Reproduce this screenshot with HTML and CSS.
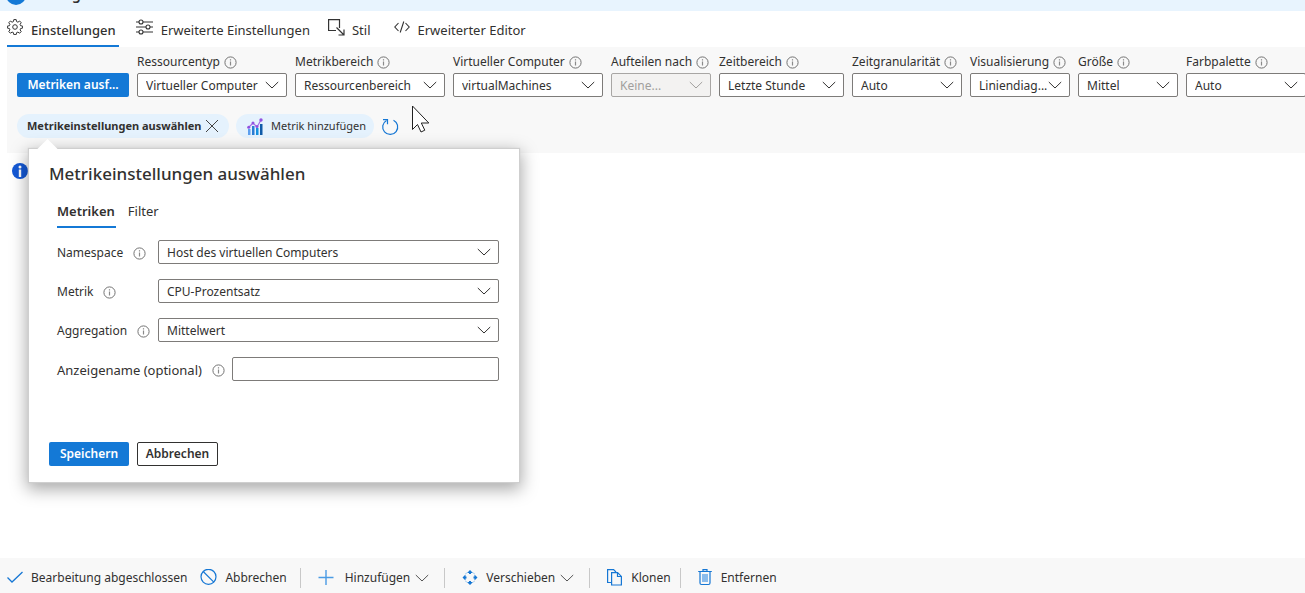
FILE: index.html
```
<!DOCTYPE html>
<html lang="de">
<head>
<meta charset="utf-8">
<title>Metriken</title>
<link rel="stylesheet" href="styles.css">
</head>
<body>
<svg class="sprite" aria-hidden="true">
  <symbol id="info" viewBox="0 0 13 13"><circle cx="6.5" cy="6.5" r="5.6" fill="none" stroke="#737373"/><path d="M6.5 5.5v4" stroke="#8a8a8a" stroke-width="1.2"/><path d="M6.5 3.2v1.3" stroke="#8a8a8a" stroke-width="1.2"/></symbol>
  <symbol id="chevron" viewBox="0 0 14 8"><path d="M.8 1L7 7l6.200-6" fill="none" stroke="currentColor"/></symbol>
</svg>
<div class="page">
  <header class="titlebar"><span class="title-dot"></span><span class="title-text">g</span></header>

  <nav class="tabs">
    <button class="tab tab-active"><svg width="16" height="16" viewBox="0 0 16 16" fill="none" stroke="#333"><circle cx="8" cy="8" r="2.3"/><path d="M6.8 .6h2.4l.4 2 1.3.6 1.7-1.2 1.6 1.7-1.1 1.7.5 1.3 2 .4v2l-2 .4-.5 1.4 1.1 1.7-1.6 1.6-1.7-1.1-1.3.5-.4 2H6.8l-.4-2-1.3-.5-1.7 1.1-1.6-1.6 1.1-1.7-.5-1.4-2-.4v-2l2-.4.5-1.3-1.1-1.7L3.400 2l1.700 1.200 1.300-.6z"/></svg>Einstellungen</button>
    <button class="tab tab-near"><svg width="17" height="16" viewBox="0 0 17 16" fill="none" stroke="#333" stroke-width="1.1"><path d="M0 3h3M7 3h10M0 8h10M14 8h3M0 13h3M7 13h10"/><circle cx="5" cy="3" r="2"/><circle cx="12" cy="8" r="2"/><circle cx="5" cy="13" r="2"/></svg>Erweiterte Einstellungen</button>
    <button class="tab tab-style"><svg width="17" height="17" viewBox="0 0 17 17" fill="none" stroke="#333" stroke-width="1.2"><path d="M8 11.500H.6V.6h10.900V9M8.500 8.500l7 7M16 10.500V16h-5.500"/></svg>Stil</button>
    <button class="tab"><svg width="16" height="14" viewBox="0 0 16 14" fill="none" stroke="#333" stroke-width="1.1"><path d="M4.500 3L.8 7l3.700 4M11.500 3l3.700 4-3.700 4M9.800 1.500L6.200 12.500"/></svg>Erweiterter Editor</button>
  </nav>

  <section class="panel">
    <div class="fields">
      <button class="btn btn-primary run">Metriken ausf...</button>
      <div class="field w-l"><label for="f1">Ressourcentyp <svg class="info"><use href="#info"/></svg></label><span class="select"><select id="f1"><option>Virtueller Computer</option></select><svg class="chev"><use href="#chevron"/></svg></span></div>
      <div class="field w-l"><label for="f2">Metrikbereich <svg class="info"><use href="#info"/></svg></label><span class="select"><select id="f2"><option>Ressourcenbereich</option></select><svg class="chev"><use href="#chevron"/></svg></span></div>
      <div class="field w-l"><label for="f3">Virtueller Computer <svg class="info"><use href="#info"/></svg></label><span class="select"><select id="f3"><option>virtualMachines</option></select><svg class="chev"><use href="#chevron"/></svg></span></div>
      <div class="field w-s"><label for="f4">Aufteilen nach <svg class="info"><use href="#info"/></svg></label><span class="select disabled"><select id="f4" disabled><option>Keine...</option></select><svg class="chev"><use href="#chevron"/></svg></span></div>
      <div class="field w-m"><label for="f5">Zeitbereich <svg class="info"><use href="#info"/></svg></label><span class="select"><select id="f5"><option>Letzte Stunde</option></select><svg class="chev"><use href="#chevron"/></svg></span></div>
      <div class="field w-n"><label for="f6">Zeitgranularität <svg class="info"><use href="#info"/></svg></label><span class="select"><select id="f6"><option>Auto</option></select><svg class="chev"><use href="#chevron"/></svg></span></div>
      <div class="field w-s"><label for="f7">Visualisierung <svg class="info"><use href="#info"/></svg></label><span class="select"><select id="f7"><option>Liniendiag...</option></select><svg class="chev"><use href="#chevron"/></svg></span></div>
      <div class="field w-s"><label for="f8">Größe <svg class="info"><use href="#info"/></svg></label><span class="select"><select id="f8"><option>Mittel</option></select><svg class="chev"><use href="#chevron"/></svg></span></div>
      <div class="field w-x"><label for="f9">Farbpalette <svg class="info"><use href="#info"/></svg></label><span class="select"><select id="f9"><option>Auto</option></select><svg class="chev"><use href="#chevron"/></svg></span></div>
    </div>
    <div class="chips">
      <button class="chip chip-current">Metrikeinstellungen auswählen<svg width="14" height="14" viewBox="0 0 14 14" stroke="#444" fill="none"><path d="M1 1l12 12M13 1L1 13"/></svg></button>
      <button class="chip chip-add"><svg width="16" height="17" viewBox="0 0 16 17"><path fill="#5ea0ef" d="M1 11h2.500v6H1z"/><path fill="#2b7cd3" d="M5 8h2.500v9H5z"/><path fill="#1490df" d="M9 10h2.500v7H9z"/><path fill="#0f5ba8" d="M13 6h2.500v11H13z"/><path d="M1.500 9.500L6 5l4 4 4-7" fill="none" stroke="#a66be8" stroke-width="1.200"/><g fill="#9152e0"><circle cx="1.700" cy="9.300" r="1.500"/><circle cx="6" cy="5" r="1.500"/><circle cx="10" cy="8.500" r="1.500"/><circle cx="14" cy="2" r="1.700"/></g></svg>Metrik hinzufügen</button>
      <button class="refresh" aria-label="Aktualisieren"><svg width="18" height="18" viewBox="0 0 18 18" fill="none" stroke="#1677d4" stroke-width="1.200"><path d="M12.500 2.200A7.500 7.500 0 1 1 5.500 2.400"/><path d="M2 1.700h4.500v4.500"/></svg></button>
    </div>

    <form class="callout">
      <h2>Metrikeinstellungen auswählen</h2>
      <div class="subtabs"><button type="button" class="subtab subtab-active">Metriken</button><button type="button" class="subtab">Filter</button></div>
      <div class="rows">
        <div class="row"><label for="c1">Namespace <svg class="info"><use href="#info"/></svg></label><span class="select"><select id="c1"><option>Host des virtuellen Computers</option></select><svg class="chev"><use href="#chevron"/></svg></span></div>
        <div class="row"><label for="c2">Metrik <svg class="info"><use href="#info"/></svg></label><span class="select"><select id="c2"><option>CPU-Prozentsatz</option></select><svg class="chev"><use href="#chevron"/></svg></span></div>
        <div class="row"><label for="c3">Aggregation <svg class="info"><use href="#info"/></svg></label><span class="select"><select id="c3"><option>Mittelwert</option></select><svg class="chev"><use href="#chevron"/></svg></span></div>
        <div class="row row-wide"><label for="c4">Anzeigename (optional) <svg class="info"><use href="#info"/></svg></label><input id="c4" type="text"></div>
      </div>
      <div class="actions"><button type="button" class="btn btn-primary save">Speichern</button><button type="button" class="btn btn-outline">Abbrechen</button></div>
    </form>
  </section>

  <main class="content">
    <svg width="16" height="16" viewBox="0 0 16 16"><circle cx="8" cy="8" r="8" fill="#1459d6"/><circle cx="8" cy="4" r="1.500" fill="#fff"/><path d="M6.800 6.500h2.400V14H6.800z" fill="#fff"/></svg>
  </main>

  <footer class="commands">
    <button class="cmd"><svg width="16" height="16" viewBox="0 0 16 16" fill="none" stroke="#1677d4" stroke-width="1.300"><path d="M.5 7.500L5 12 15.500 2"/></svg>Bearbeitung abgeschlossen</button>
    <button class="cmd cmd-cancel"><svg width="17" height="17" viewBox="0 0 17 17" fill="none" stroke="#1677d4" stroke-width="1.200"><circle cx="8.500" cy="7.800" r="7.500"/><path d="M3.200 2.500l10.600 10.600"/></svg>Abbrechen</button>
    <button class="cmd cmd-divided cmd-add"><svg width="16" height="16" viewBox="0 0 16 16" fill="none" stroke="#4a9be4" stroke-width="1.400"><path d="M8 0v15M.5 7.500h15"/></svg>Hinzufügen<svg class="chev"><use href="#chevron"/></svg></button>
    <button class="cmd cmd-divided cmd-menu"><svg width="16" height="16" viewBox="0 0 16 16"><path fill="#1677d4" d="M8 0l3 3H9v1H7V3H5zM8 15l-3-3h2v-1h2v1h2zM.5 7.500l3-3v2h1v2h-1v2zM15.500 7.500l-3 3v-2h-1v-2h1v-2z"/><path d="M3.500 4L5 2.500M11 2.500L12.500 4M3.500 11L5 12.500M11 12.500l1.500-1.500" stroke="#8fc2ee" fill="none"/></svg>Verschieben<svg class="chev"><use href="#chevron"/></svg></button>
    <button class="cmd cmd-divided cmd-menu"><svg width="15" height="17" viewBox="0 0 15 17" fill="none" stroke="#1677d4" stroke-width="1.200"><path d="M4.500 13.500H.6V.6h6L9 3M4.600 3.600h6l3.800 3.800v8.600H4.600zM10.500 3.600v3.900h3.900"/></svg>Klonen</button>
    <button class="cmd cmd-divided cmd-remove"><svg width="14" height="17" viewBox="0 0 14 17" fill="none" stroke="#1677d4" stroke-width="1.200"><path d="M2 3v11q0 1.500 1.500 1.500h7q1.500 0 1.500-1.500V3"/><path d="M.2 2.500h13.600M5 2.300V.6h4v1.700"/><path d="M4 5h6v8H4z" fill="#8bbcec" stroke="none"/></svg>Entfernen</button>
  </footer>

  <svg class="pointer" width="20" height="28" viewBox="0 0 20 28"><path d="M1.500 1v23.500l5-5 3.500 7.500 3.800-1.800-3.500-7.200h7.500z" fill="#fff" stroke="#222"/></svg>
</div>
</body>
</html>
```
FILE: styles.css
```
* { box-sizing: border-box; }
body {
  margin: 0;
  overflow: hidden;
  background: #fff;
  color: #323130;
  font: 13px/20px "Noto Sans", "Open Sans", sans-serif;
}
button, select, input { font: inherit; color: inherit; }
button { border: 0; padding: 0; background: none; white-space: nowrap; }
svg { flex: none; }
.sprite { position: absolute; width: 0; height: 0; }
.page { position: relative; display: flex; flex-direction: column; min-height: 100vh; }

.titlebar { display: flex; align-items: flex-end; gap: 46px; height: 11px; padding: 0 6px 6px; overflow: hidden; background: #e8f4fe; }
.title-dot { width: 20px; height: 20px; border-radius: 50%; background: #1479d6; flex: none; }
.title-text { font-size: 14px; font-weight: 600; line-height: 20px; }

.tabs { display: flex; gap: 17px; height: 36px; padding-left: 7px; }
.tab { display: flex; align-items: center; gap: 8px; padding: 4px 3px 0 0; border-bottom: 2px solid transparent; }
.tab svg { margin-bottom: 6px; }
.tab-active { border-color: #1479d6; font-weight: 500; }
.tab-near { padding-right: 1px; }
.tab-style { gap: 7px; padding-right: 6px; }

.panel { position: relative; margin-left: 7px; padding: 5px 0 15px 10px; background: #f8f8f8; }
.fields { display: flex; align-items: flex-end; gap: 8px; }
.field { display: flex; flex-direction: column; gap: 1px; flex: none; }
.field label { display: flex; align-items: center; gap: 4px; white-space: nowrap; font-size: 12px; }
.w-l { width: 150px; }
.w-s { width: 100px; }
.w-m { width: 125px; }
.w-n { width: 110px; }
.w-x { width: 120px; }
.info { width: 13px; height: 13px; }
.chev { width: 14px; height: 8px; }

.select { position: relative; display: block; }
.select select, .row input {
  display: block;
  width: 100%;
  height: 24px;
  padding: 1px 8px 0;
  border: 1px solid #7d7b79;
  border-radius: 2px;
  background: #fff;
  font-size: 12px;
  appearance: none;
}
.select .chev { position: absolute; right: 8px; top: 8px; pointer-events: none; }
.select.disabled { color: #a19f9d; }
.select.disabled select { background: #f3f2f1; border-color: #a8a6a4; opacity: 1; }

.btn { height: 24px; border-radius: 2px; font-size: 12px; font-weight: 600; line-height: 22px; }
.btn-primary { background: #1479d6; color: #fff; }
.btn-outline { border: 1px solid #323130; width: 81px; background: #fff; }
.run { width: 112px; flex: none; }
.save { width: 80px; }

.chips { display: flex; align-items: center; gap: 7px; margin-top: 17px; }
.chip { display: flex; align-items: center; height: 24px; border-radius: 12px; background: #e5f2fd; font-size: 11px; }
.chip-current { width: 212px; justify-content: space-between; padding: 0 10px; font-weight: 700; }
.chip-add { gap: 8px; padding: 0 8px 0 11px; }
.refresh { display: flex; padding-top: 1px; }

.callout {
  position: absolute;
  left: 22px;
  top: 102px;
  width: 490px;
  padding: 14px 20px 16px;
  background: #fff;
  box-shadow: 0 0 1px 1px #cfcfcf, 0 5px 16px 2px rgba(0, 0, 0, .35);
}
.callout::before { content: ""; position: absolute; left: 11px; top: -7px; width: 15px; height: 15px; background: #fff; transform: rotate(45deg); }
.callout h2 { position: relative; margin: 0; font-size: 17px; line-height: 22px; font-weight: 550; }
.subtabs { display: flex; gap: 12px; padding: 15px 8px 0; }
.subtab { height: 28px; border-bottom: 2px solid transparent; padding-bottom: 4px; }
.subtab-active { border-color: #1479d6; padding-right: 1px; font-weight: 600; }
.rows { display: grid; gap: 15px; margin-top: 12px; padding-left: 8px; }
.row { display: grid; grid-template-columns: 101px 1fr; align-items: center; }
.row label { display: flex; align-items: center; gap: 10px; padding-top: 2px; white-space: nowrap; font-size: 12px; }
.row-wide { grid-template-columns: 175px 1fr; }
.row-wide label { font-size: 13px; }
.actions { display: flex; gap: 8px; margin-top: 61px; }

.content { flex: 1; padding: 10px 12px; }

.commands { display: flex; align-items: center; height: 35px; padding: 4px 7px 0; background: #f8f8f8; font-size: 12px; }
.cmd { display: flex; align-items: center; gap: 8px; flex: none; }
.cmd .chev { margin-left: -3px; color: #555; }
.cmd-cancel { margin-left: 13px; }
.cmd-divided { padding-left: 17px; border-left: 1px solid #c8c8c8; }
.cmd-add { margin-left: 13px; gap: 11px; }
.cmd-add .chev { margin-left: -6px; }
.cmd-menu { margin-left: 15px; }
.cmd-menu + .cmd-menu { gap: 9px; }
.cmd-remove { margin-left: 9px; gap: 9px; }

.pointer { position: absolute; left: 411px; top: 105px; }
```
